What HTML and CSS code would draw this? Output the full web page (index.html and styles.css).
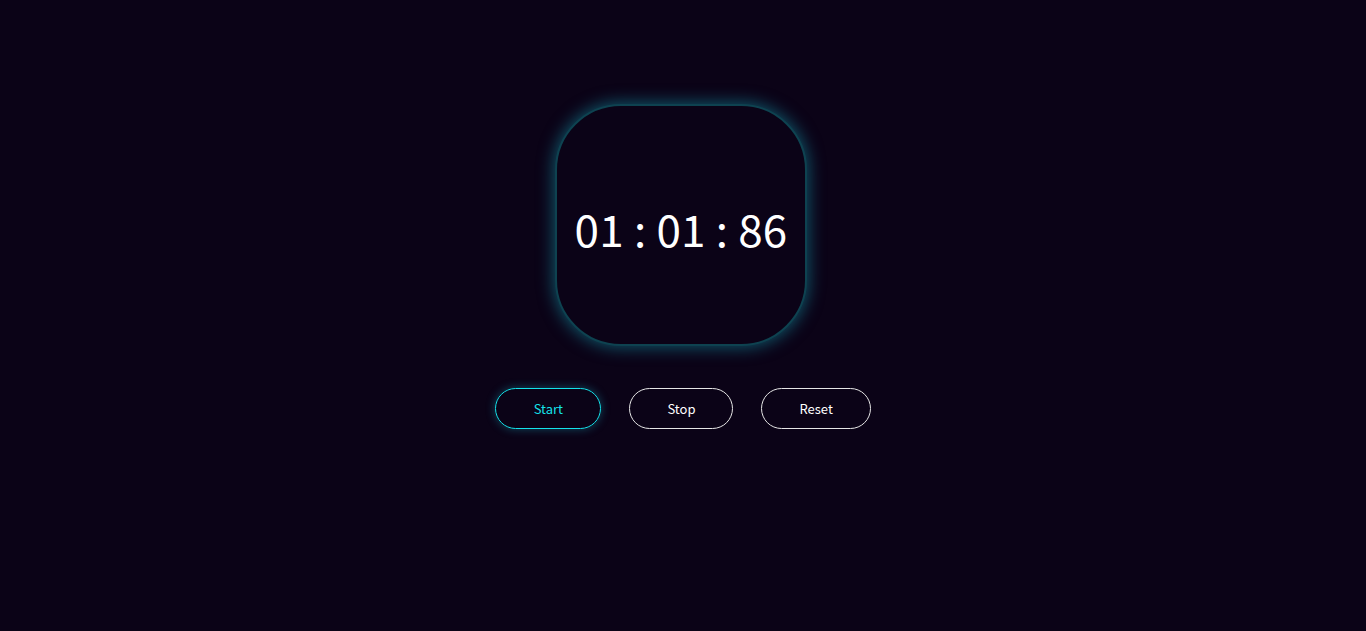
FILE: index.html
```html
<!DOCTYPE html>
<html>
<head>
<meta charset="utf-8">
<link rel="stylesheet" href="styles.css">
</head>
<body>
<main class="app">
  <div class="clock">
    <span class="time">01 : 01 : 86</span>
  </div>
  <div class="controls">
    <button class="btn btn-start">Start</button>
    <button class="btn">Stop</button>
    <button class="btn">Reset</button>
  </div>
</main>
</body>
</html>
```
FILE: styles.css
```css
html, body {
  margin: 0;
  padding: 0;
  background: #0b0317;
  height: 100%;
}
body {
  font-family: "Noto Sans CJK JP", "Noto Sans", sans-serif;
  color: #fff;
}
.app {
  display: flex;
  flex-direction: column;
  align-items: center;
  padding-top: 104px;
}
.clock {
  width: 252px;
  height: 242px;
  box-sizing: border-box;
  border-radius: 66px;
  background: #0b0317;
  border: 2px solid #0e4250;
  box-shadow: 0 0 16px 2px rgba(20, 160, 180, 0.5);
  display: flex;
  align-items: center;
  justify-content: center;
  padding-top: 6px;
  margin-left: -4px;
}
.time {
  font-size: 44px;
  letter-spacing: 0.2px;
  color: #fff;
  white-space: pre;
}
.controls {
  display: flex;
  gap: 28px;
  margin-top: 42px;
}
.btn {
  font-family: inherit;
  font-size: 13px;
  font-weight: 400;
  color: #fff;
  background: transparent;
  border: 1px solid #e6e6e6;
  border-radius: 21px;
  height: 41px;
  padding: 0 37px;
  cursor: pointer;
}
.btn-start {
  padding: 0 37.5px;
  color: #14e2ea;
  border-color: #14e2ea;
  box-shadow: 0 0 10px rgba(25, 200, 220, 0.35);
}
```
